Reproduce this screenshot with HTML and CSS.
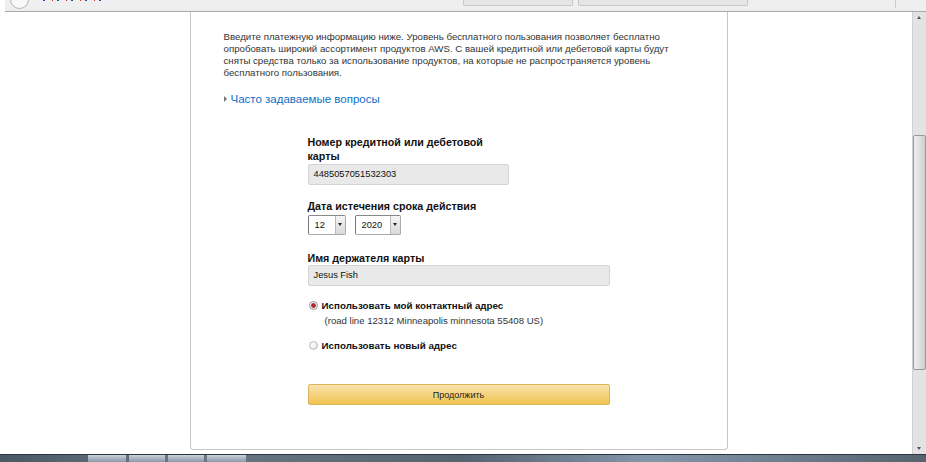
FILE: index.html
```html
<!DOCTYPE html>
<html lang="ru">
<head>
    <meta charset="UTF-8">
    <title>Платежная информация</title>
    <link rel="stylesheet" href="styles.css">
</head>
<body>

<!-- Browser chrome strip, only the bottom of it is visible -->
<div class="chrome">
    <span class="chrome-btn"></span>
    <span class="chrome-dots"></span>
    <span class="chrome-tab tab-one"></span>
    <span class="chrome-tab tab-two"></span>
    <span class="chrome-sep"></span>
</div>

<div class="viewport">
    <div class="page">
        <div class="card">
            <p class="intro">Введите платежную информацию ниже. Уровень бесплатного пользования позволяет бесплатно<br>
                опробовать широкий ассортимент продуктов AWS. С вашей кредитной или дебетовой карты будут<br>
                сняты средства только за использование продуктов, на которые не распространяется уровень<br>
                бесплатного пользования.</p>

            <a class="faq" href="#"><span class="faq-arrow"></span>Часто задаваемые вопросы</a>

            <form class="pay-form">
                <label class="field-label label-card">Номер кредитной или дебетовой карты</label>
                <div class="text-input input-short">4485057051532303</div>

                <label class="field-label label-date">Дата истечения срока действия</label>
                <div class="date-row">
                    <div class="select select-month">
                        <span class="select-value">12</span>
                        <span class="select-arrow"></span>
                    </div>
                    <div class="select select-year">
                        <span class="select-value">2020</span>
                        <span class="select-arrow"></span>
                    </div>
                </div>

                <label class="field-label label-name">Имя держателя карты</label>
                <div class="text-input">Jesus Fish</div>

                <div class="radio-row radio-first">
                    <span class="radio checked"></span>
                    <span class="radio-text">Использовать мой контактный адрес</span>
                </div>
                <div class="address">(road line 12312 Minneapolis minnesota 55408 US)</div>

                <div class="radio-row radio-second">
                    <span class="radio"></span>
                    <span class="radio-text">Использовать новый адрес</span>
                </div>

                <button type="button" class="continue">Продолжить</button>
            </form>
        </div>
    </div>

    <!-- Window scrollbar -->
    <div class="scrollbar">
        <span class="scroll-arrow up"></span>
        <div class="scroll-track">
            <span class="scroll-thumb"></span>
        </div>
        <span class="scroll-arrow down"></span>
    </div>
</div>

<!-- Taskbar -->
<div class="taskbar">
    <span class="task-btn task-one"></span>
    <span class="task-btn task-two"></span>
    <span class="task-btn task-three"></span>
    <span class="task-btn task-four"></span>
</div>

</body>
</html>
```

FILE: styles.css
```css
body {
    margin: 0;
    padding: 0;
    height: 462px;
    overflow: hidden;
    background-color: #fff;
    font-family: "Liberation Sans", Arial, sans-serif;
    color: #333;
    display: flex;
    flex-direction: column;
}

/* Browser chrome */
.chrome {
    position: relative;
    height: 11px;
    margin-left: 5px;
    background-color: #efefef;
    border-bottom: 1px solid #a9a9a9;
    flex-shrink: 0;
    overflow: hidden;
}

.chrome-btn {
    position: absolute;
    left: 5px;
    top: -10px;
    width: 17px;
    height: 17px;
    border: 1px solid #b5b5b5;
    border-radius: 50%;
    background-color: #f8f8f8;
}

.chrome-dots {
    position: absolute;
    left: 38px;
    top: 0;
    width: 60px;
    height: 1px;
    background: repeating-linear-gradient(90deg, #1c4fa8 0 2px, transparent 2px 9px, #c33 9px 10px, transparent 10px 14px);
}

.chrome-tab {
    position: absolute;
    top: 0;
    height: 5px;
    border: 1px solid #c8c8c8;
    border-top: none;
    border-radius: 0 0 2px 2px;
    background-color: #e6e6e6;
}

.tab-one {
    left: 458px;
    width: 108px;
}

.tab-two {
    left: 573px;
    width: 168px;
}

.chrome-sep {
    position: absolute;
    left: 890px;
    top: 0;
    width: 1px;
    height: 8px;
    background-color: #ccc;
}

/* Main area */
.viewport {
    flex: 1;
    display: flex;
    min-height: 0;
}

.page {
    flex: 1;
    display: flex;
    justify-content: center;
    align-items: flex-start;
}

.card {
    width: 538px;
    box-sizing: border-box;
    padding: 19px 33px 44px;
    border: 1px solid #c6c6c6;
    border-top: none;
    border-radius: 0 0 4px 4px;
    background-color: #fff;
    margin-left: 5px;
}

.intro {
    margin: 0;
    font-size: 9.7px;
    line-height: 12px;
    white-space: nowrap;
    color: #333;
}

.faq {
    display: flex;
    align-items: center;
    margin-top: 12px;
    height: 16px;
    font-size: 11.5px;
    color: #0f6fc6;
    text-decoration: none;
}

.faq-arrow {
    width: 0;
    height: 0;
    margin-right: 4px;
    border-left: 3px solid #777;
    border-top: 3px solid transparent;
    border-bottom: 3px solid transparent;
}

/* Form */
.pay-form {
    width: 302px;
    margin: 28px 0 0 84px;
    display: flex;
    flex-direction: column;
    align-items: flex-start;
}

.field-label {
    display: block;
    font-size: 10.7px;
    font-weight: bold;
    line-height: 14px;
    color: #111;
}

.label-card {
    width: 190px;
    margin-top: 0;
}

.label-date {
    margin-top: 14px;
}

.label-name {
    margin-top: 16px;
}

.text-input {
    box-sizing: border-box;
    width: 302px;
    height: 21px;
    margin-top: 1px;
    padding: 0 5px;
    border: 1px solid #d4d4d4;
    border-radius: 2px;
    background-color: #e9e9e9;
    font-size: 9.3px;
    line-height: 19px;
    color: #111;
}

.input-short {
    width: 201px;
}

.label-name + .text-input {
    margin-top: 0;
}

.date-row {
    display: flex;
    gap: 9px;
    margin-top: 2px;
}

.select {
    box-sizing: border-box;
    height: 20px;
    display: flex;
    border: 1px solid #aaa;
    border-left-color: #777;
    border-top-color: #888;
    border-radius: 2px;
    background-color: #fff;
}

.select-month {
    width: 38px;
}

.select-year {
    width: 46px;
}

.select-value {
    flex: 1;
    padding-left: 6px;
    font-size: 9.3px;
    line-height: 18px;
    color: #111;
}

.select-arrow {
    position: relative;
    width: 9px;
    border-left: 1px solid #bbb;
    background: linear-gradient(#f4f4f4, #d9d9d9);
}

.select-arrow::after {
    content: "";
    position: absolute;
    left: 2px;
    top: 7px;
    border-top: 3px solid #222;
    border-left: 2.5px solid transparent;
    border-right: 2.5px solid transparent;
}

.radio-row {
    display: flex;
    align-items: center;
    height: 14px;
}

.radio-first {
    margin-top: 12px;
}

.radio-second {
    margin-top: 10px;
}

.radio {
    box-sizing: border-box;
    width: 9px;
    height: 9px;
    margin: 0 4px 0 1px;
    border: 1px solid #b9b9b9;
    border-radius: 50%;
    background: radial-gradient(circle at 40% 40%, #fff, #dcdcdc);
}

.radio.checked {
    background: radial-gradient(circle, #b3282b 0 2px, #e9e9e9 2.5px);
    border-color: #999;
}

.radio-text {
    font-size: 9.8px;
    font-weight: bold;
    color: #111;
}

.address {
    margin-top: 2px;
    padding-left: 17px;
    font-size: 9.6px;
    line-height: 14px;
    color: #333;
}

.continue {
    box-sizing: border-box;
    width: 302px;
    height: 21px;
    margin-top: 32px;
    padding: 0;
    border: 1px solid #d9b45a;
    border-radius: 2px;
    background: linear-gradient(#f8e3ad, #f1c452);
    font-family: inherit;
    font-size: 9px;
    color: #222;
    cursor: pointer;
}

/* Scrollbar */
.scrollbar {
    width: 13px;
    flex-shrink: 0;
    display: flex;
    flex-direction: column;
    background-color: #e3e3e3;
    border-left: 1px solid #d0d0d0;
}

.scroll-arrow {
    position: relative;
    height: 11px;
    flex-shrink: 0;
}

.scroll-arrow::after {
    content: "";
    position: absolute;
    left: 4px;
    top: 4px;
    border-left: 2.5px solid transparent;
    border-right: 2.5px solid transparent;
}

.scroll-arrow.up::after {
    border-bottom: 3px solid #555;
}

.scroll-arrow.down::after {
    border-top: 3px solid #555;
}

.scroll-track {
    flex: 1;
    padding-top: 112px;
}

.scroll-thumb {
    display: block;
    box-sizing: border-box;
    height: 235px;
    border: 1px solid #999;
    border-radius: 2px;
    background: linear-gradient(90deg, #eee, #ddd 60%, #ccc);
}

/* Taskbar */
.taskbar {
    height: 7px;
    flex-shrink: 0;
    display: flex;
    padding-left: 88px;
    gap: 3px;
    background: linear-gradient(90deg, #4a5866, #6b7784 20%, #556270 50%, #8397ab 70%, #56636f);
    border-top: 1px solid #2d3640;
}

.task-btn {
    display: block;
    height: 7px;
    background: linear-gradient(#c9d2dc, #8a98a8);
}

.task-one {
    width: 38px;
}

.task-two {
    width: 36px;
}

.task-three {
    width: 36px;
}

.task-four {
    width: 39px;
}
```
